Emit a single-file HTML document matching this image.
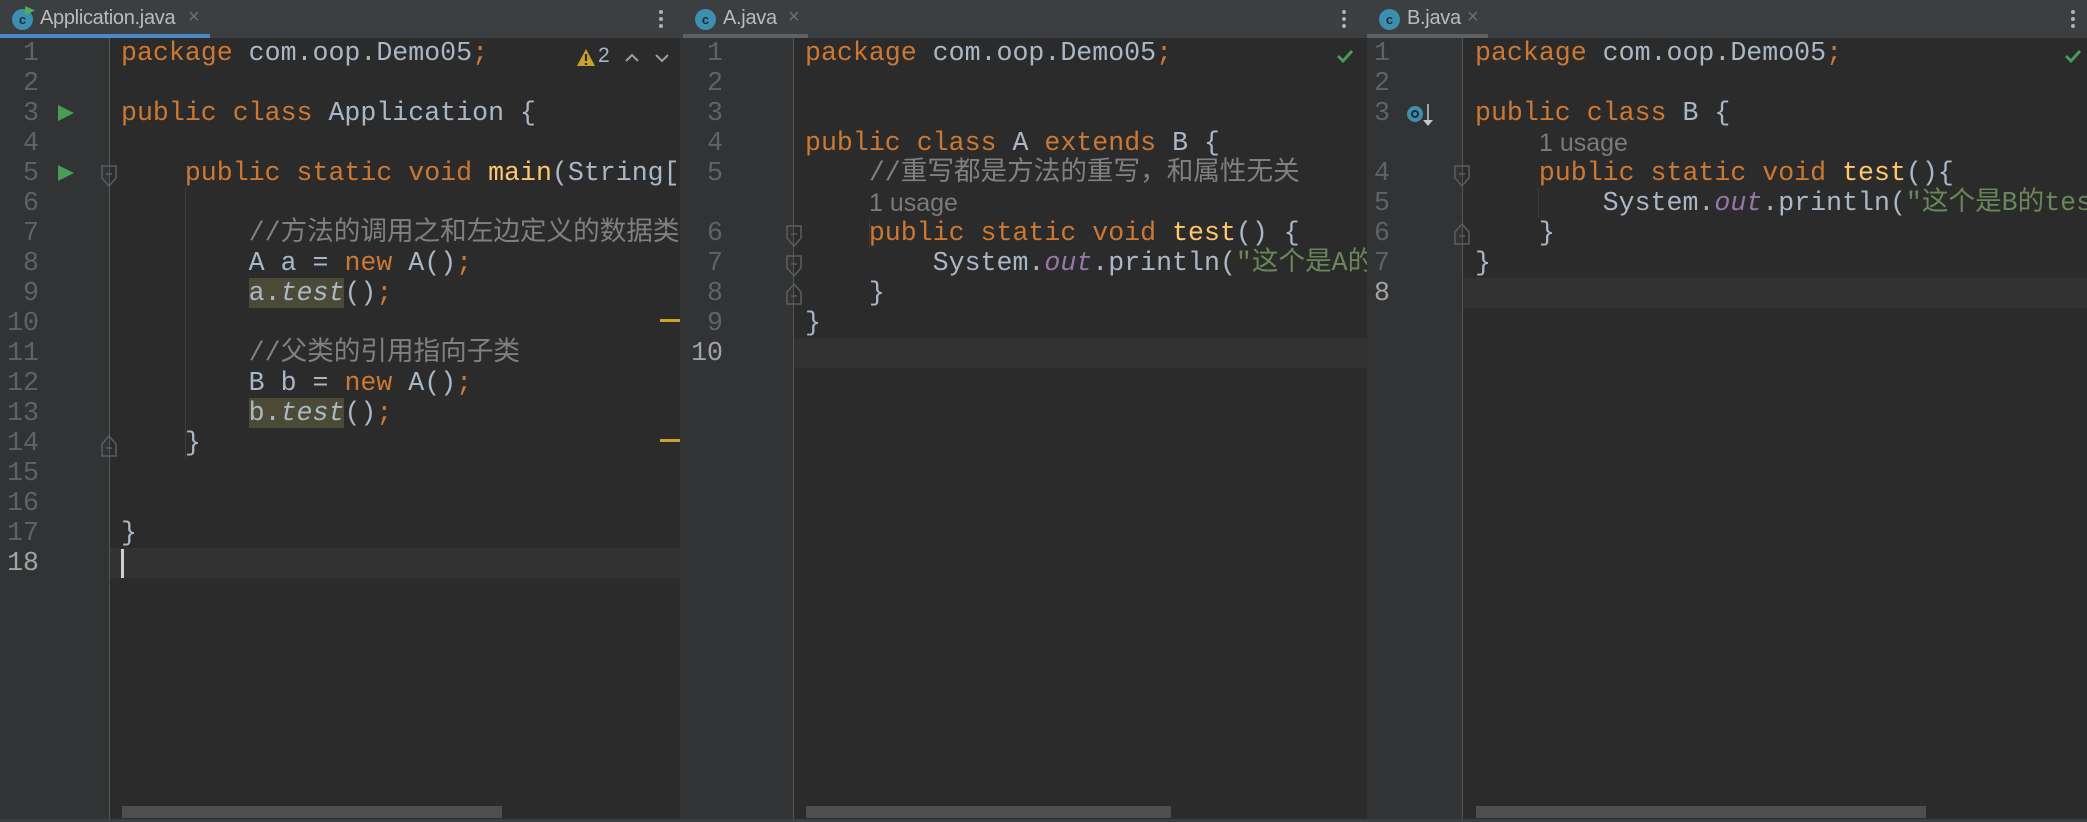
<!DOCTYPE html>
<html><head><meta charset="utf-8"><style>
*{margin:0;padding:0;box-sizing:border-box}
body{width:2087px;height:822px;background:#2b2b2b;overflow:hidden;position:relative;font-family:"Liberation Mono","Noto Sans CJK SC",monospace}
.pane{position:absolute;top:0;height:822px;overflow:hidden;background:#2b2b2b}
.tabbar{position:absolute;left:0;top:0;right:0;height:38px;background:#3c3f41}
.tab{position:absolute;top:0;height:38px;font-family:"Liberation Sans",sans-serif;font-size:20px;color:#bbbbbb}
.tab .ic{position:absolute;left:12px;top:9px;width:21px;height:21px;border-radius:50%;background:#3d8fb0;color:#1e2b33;font-size:13px;line-height:21px;text-align:center;font-weight:bold}
.tab .nm{position:absolute;left:40px;top:7px;letter-spacing:-0.3px}
.tab .x{position:absolute;top:6px;color:#6e6e6e;font-size:20px}
.tab .ul{position:absolute;left:0;right:0;bottom:0;height:4px}
.kebab{position:absolute;top:10px;width:4px}
.kebab i{display:block;width:4px;height:4px;border-radius:2px;background:#afb1b3;margin-bottom:3px}
.gutter{position:absolute;top:38px;left:0;bottom:0;background:#313335}
.gline{position:absolute;top:38px;bottom:0;width:1px;background:#555555}
.ln{position:absolute;font-size:26.6px;line-height:30px;color:#606366;text-align:right;width:40px}
.code{position:absolute;font-size:26.6px;line-height:30px;color:#a9b7c6;white-space:pre}
.k{color:#cc7832}.c{color:#808080}.f{color:#ffc66d}.s{color:#6a8759}.o{color:#9876aa;font-style:italic}.i{font-style:italic}
.hl{background:#4b4a36}
.usage{position:absolute;font-family:"Liberation Sans",sans-serif;font-size:25px;line-height:30px;color:#7a7a7a}
.cur{position:absolute;height:30px;background:#323232}
.sb{position:absolute;top:806px;height:12px;background:#4e4e4e}
.guide{position:absolute;width:1px;background:#3b3b3b}
</style></head><body>

<!-- PANE 1 -->
<div class="pane" style="left:0;width:680px">
 <div class="tabbar"></div>
 <div class="tab" style="left:0;width:210px;background:#3c3f41">
  <div class="ic">c</div>
  <svg style="position:absolute;left:24px;top:5px" width="12" height="12"><path d="M1 1 L11 5.5 L1 10Z" fill="#4fb04f"/></svg>
  <div class="nm">Application.java</div><div class="x" style="left:188px">×</div>
  <div class="ul" style="background:#4a88c7"></div>
 </div>
 <div class="kebab" style="left:659px"><i></i><i></i><i></i></div>
 <div class="gutter" style="width:109px"></div>
 <div class="cur" style="left:109px;width:571px;top:548px"></div>
 <div class="gline" style="left:109px"></div>
 <div class="guide" style="left:185px;top:188px;height:270px"></div>
 <div class="ln" style="left:0;top:38px;line-height:30px;width:39px">1<br>2<br>3<br>4<br>5<br>6<br>7<br>8<br>9<br>10<br>11<br>12<br>13<br>14<br>15<br>16<br>17<br><span style="color:#a4a3a3">18</span></div>
 <svg style="position:absolute;left:57px;top:104px" width="18" height="18"><path d="M1 1 L17 9 L1 17Z" fill="#499c54"/></svg>
 <svg style="position:absolute;left:57px;top:164px" width="18" height="18"><path d="M1 1 L17 9 L1 17Z" fill="#499c54"/></svg>
 <svg style="position:absolute;left:100px;top:164px" width="18" height="28"><path d="M2 2 H16 V14 L9 22 L2 14Z" fill="none" stroke="#5a5d5f" stroke-width="1.5"/><path d="M6 10 H12" stroke="#5a5d5f" stroke-width="1.5"/></svg>
 <svg style="position:absolute;left:100px;top:430px" width="18" height="28"><path d="M2 26 H16 V14 L9 6 L2 14Z" fill="none" stroke="#5a5d5f" stroke-width="1.5"/><path d="M6 18 H12" stroke="#5a5d5f" stroke-width="1.5"/></svg>
 <div class="code" style="left:121px;top:38px"><span class="k">package</span> com.oop.Demo05<span class="k">;</span>

<span class="k">public class</span> Application {

    <span class="k">public static void</span> <span class="f">main</span>(String[] args) {

        <span class="c">//方法的调用之和左边定义的数据类型有关</span>
        A a = <span class="k">new</span> A()<span class="k">;</span>
        <span class="hl">a.<span class="i">test</span></span>()<span class="k">;</span>

        <span class="c">//父类的引用指向子类</span>
        B b = <span class="k">new</span> A()<span class="k">;</span>
        <span class="hl">b.<span class="i">test</span></span>()<span class="k">;</span>
    }


}
</div>
 <div style="position:absolute;left:121px;top:549px;width:3px;height:29px;background:#cfcfcf"></div>
 <div style="position:absolute;left:560px;top:40px;width:120px;height:38px;background:#2b2b2b"></div>
 <svg style="position:absolute;left:576px;top:48px" width="20" height="20"><path d="M10 1 L19 18 H1Z" fill="#c9a227"/><path d="M10 6 V13 M10 15 V17" stroke="#2b2b2b" stroke-width="2.2"/></svg>
 <div style="position:absolute;left:598px;top:44px;font-family:'Liberation Sans',sans-serif;font-size:21px;color:#a9b7c6">2</div>
 <svg style="position:absolute;left:624px;top:52px" width="16" height="12"><path d="M2 9 L8 3 L14 9" fill="none" stroke="#a0a0a0" stroke-width="2"/></svg>
 <svg style="position:absolute;left:654px;top:52px" width="16" height="12"><path d="M2 3 L8 9 L14 3" fill="none" stroke="#a0a0a0" stroke-width="2"/></svg>
 <div style="position:absolute;left:660px;top:319px;width:20px;height:3px;background:#c9a227"></div>
 <div style="position:absolute;left:660px;top:439px;width:20px;height:3px;background:#c9a227"></div>
 <div class="sb" style="left:122px;width:380px"></div>
</div>

<!-- PANE 2 -->
<div class="pane" style="left:680px;width:687px">
 <div class="tabbar"></div>
 <div class="tab" style="left:3px;width:125px">
  <div class="ic">c</div><div class="nm">A.java</div><div class="x" style="left:105px">×</div>
  <div class="ul" style="background:#5e6163"></div>
 </div>
 <div class="kebab" style="left:662px"><i></i><i></i><i></i></div>
 <div class="gutter" style="width:113px"></div>
 <div class="cur" style="left:113px;width:574px;top:338px"></div>
 <div class="gline" style="left:113px"></div>
 <div class="guide" style="left:189px;top:218px;height:30px"></div>
 <div class="ln" style="left:3px;top:38px">1<br>2<br>3<br>4<br>5<br><br>6<br>7<br>8<br>9<br><span style="color:#a4a3a3">10</span></div>
 <svg style="position:absolute;left:105px;top:224px" width="18" height="28"><path d="M2 2 H16 V14 L9 22 L2 14Z" fill="none" stroke="#5a5d5f" stroke-width="1.5"/><path d="M6 10 H12" stroke="#5a5d5f" stroke-width="1.5"/></svg>
 <svg style="position:absolute;left:105px;top:254px" width="18" height="28"><path d="M2 2 H16 V14 L9 22 L2 14Z" fill="none" stroke="#5a5d5f" stroke-width="1.5"/><path d="M6 10 H12" stroke="#5a5d5f" stroke-width="1.5"/></svg>
 <svg style="position:absolute;left:105px;top:278px" width="18" height="28"><path d="M2 26 H16 V14 L9 6 L2 14Z" fill="none" stroke="#5a5d5f" stroke-width="1.5"/><path d="M6 18 H12" stroke="#5a5d5f" stroke-width="1.5"/></svg>
 <div class="code" style="left:125px;top:38px"><span class="k">package</span> com.oop.Demo05<span class="k">;</span>


<span class="k">public class</span> A <span class="k">extends</span> B {
    <span class="c">//重写都是方法的重写，和属性无关</span>

    <span class="k">public static void</span> <span class="f">test</span>() {
        System.<span class="o">out</span>.println(<span class="s">"这个是A的test"</span>)<span class="k">;</span>
    }
}
</div>
 <div class="usage" style="left:189px;top:188px">1 usage</div>
 <div style="position:absolute;left:650px;top:40px;width:37px;height:36px;background:#2b2b2b"></div>
 <svg style="position:absolute;left:656px;top:48px" width="18" height="16"><path d="M2 8 L7 13 L16 3" fill="none" stroke="#499c54" stroke-width="3"/></svg>
 <div class="sb" style="left:126px;width:365px"></div>
</div>

<!-- PANE 3 -->
<div class="pane" style="left:1367px;width:720px">
 <div class="tabbar"></div>
 <div class="tab" style="left:0;width:121px">
  <div class="ic">c</div><div class="nm">B.java</div><div class="x" style="left:100px">×</div>
  <div class="ul" style="background:#5e6163"></div>
 </div>
 <div class="kebab" style="left:704px"><i></i><i></i><i></i></div>
 <div class="gutter" style="width:95px"></div>
 <div class="cur" style="left:95px;width:625px;top:278px"></div>
 <div class="gline" style="left:95px"></div>
 <div class="guide" style="left:171px;top:188px;height:30px"></div>
 <div class="ln" style="left:-17px;top:38px">1<br>2<br>3<br><br>4<br>5<br>6<br>7<br><span style="color:#a4a3a3">8</span></div>
 <svg style="position:absolute;left:39px;top:102px" width="30" height="26"><circle cx="9" cy="12" r="8" fill="#3d8fb0"/><circle cx="9" cy="12" r="3" fill="none" stroke="#1e2b33" stroke-width="2"/><path d="M22 2 V20" stroke="#c8c8c8" stroke-width="1.5"/><path d="M17 18 L22 24 L27 18Z" fill="#c8c8c8"/></svg>
 <svg style="position:absolute;left:86px;top:164px" width="18" height="28"><path d="M2 2 H16 V14 L9 22 L2 14Z" fill="none" stroke="#5a5d5f" stroke-width="1.5"/><path d="M6 10 H12" stroke="#5a5d5f" stroke-width="1.5"/></svg>
 <svg style="position:absolute;left:86px;top:218px" width="18" height="28"><path d="M2 26 H16 V14 L9 6 L2 14Z" fill="none" stroke="#5a5d5f" stroke-width="1.5"/><path d="M6 18 H12" stroke="#5a5d5f" stroke-width="1.5"/></svg>
 <div class="code" style="left:108px;top:38px"><span class="k">package</span> com.oop.Demo05<span class="k">;</span>

<span class="k">public class</span> B {

    <span class="k">public static void</span> <span class="f">test</span>(){
        System.<span class="o">out</span>.println(<span class="s">"这个是B的test"</span>)<span class="k">;</span>
    }
}
</div>
 <div class="usage" style="left:172px;top:128px">1 usage</div>
 <div style="position:absolute;left:690px;top:40px;width:30px;height:36px;background:#2b2b2b"></div>
 <svg style="position:absolute;left:697px;top:48px" width="18" height="16"><path d="M2 8 L7 13 L16 3" fill="none" stroke="#499c54" stroke-width="3"/></svg>
 <div class="sb" style="left:109px;width:450px"></div>
</div>

<div style="position:absolute;left:0;top:819px;width:2087px;height:3px;background:#3c3f41"></div>
</body></html>
